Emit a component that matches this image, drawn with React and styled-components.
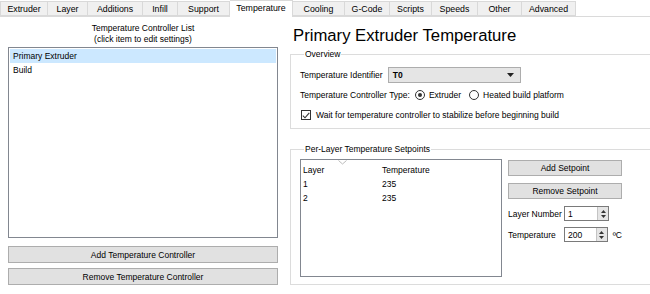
import React from 'react'
import styled, { createGlobalStyle } from 'styled-components'

// ─── global ────────────────────────────────────────────────────────────────
const GlobalStyle = createGlobalStyle`
  html, body {
    margin: 0;
    padding: 0;
    background: #fff;
    overflow: hidden;
  }
  body {
    font-family: 'Liberation Sans', Arial, sans-serif;
    font-size: 8.5px;
    color: #000;
  }
`

// ─── tab strip ─────────────────────────────────────────────────────────────
const Page = styled.div`
  width: 650px;
  height: 294px;
  display: flex;
  flex-direction: column;
  overflow: hidden;
`

const TabStrip = styled.div`
  height: 17px;
  display: flex;
  align-items: flex-end;
  background: #fff;
  box-sizing: border-box;
  border-bottom: 1px solid #dadada;
`

const Tab = styled.div`
  box-sizing: border-box;
  width: ${p => p.$w}px;
  height: ${p => (p.$active ? 17 : 15)}px;
  margin-bottom: ${p => (p.$active ? -1 : 0)}px;
  display: flex;
  align-items: center;
  justify-content: center;
  background: ${p => (p.$active ? '#fff' : '#f0f0f0')};
  border: 1px solid #d9d9d9;
  border-bottom: ${p => (p.$active ? 'none' : '1px solid #d9d9d9')};
  border-left-width: ${p => (p.$first ? 1 : 0)}px;
  padding-bottom: ${p => (p.$active ? 2 : 0)}px;
  font-size: 8.8px;
`

const Body = styled.div`
  flex: 1;
  display: flex;
  gap: 12px;
  padding: 0 0 0 8px;
`

// ─── left column ───────────────────────────────────────────────────────────
const LeftCol = styled.div`
  width: 270px;
  display: flex;
  flex-direction: column;
  padding-top: 6px;
`

const ListCaption = styled.div`
  text-align: center;
  line-height: 11px;
  margin-bottom: 2px;
`

const ListBox = styled.div`
  height: 191px;
  box-sizing: border-box;
  border: 1px solid #828790;
  padding: 1px;
  margin-bottom: 8px;
`

const ListItem = styled.div`
  height: 14px;
  line-height: 14px;
  padding-left: 3px;
  background: ${p => (p.$selected ? '#cce8ff' : 'transparent')};
`

const Button = styled.div`
  box-sizing: border-box;
  height: ${p => p.$h || 17}px;
  display: flex;
  align-items: center;
  justify-content: center;
  background: #e1e1e1;
  border: 1px solid #adadad;
  white-space: nowrap;
  margin-bottom: ${p => p.$mb || 0}px;
`

// ─── right column ──────────────────────────────────────────────────────────
const RightCol = styled.div`
  flex: 1;
  display: flex;
  flex-direction: column;
  margin-right: -20px;
`

const Title = styled.div`
  font-size: 16.7px;
  line-height: 20px;
  padding: 9px 0 0 3px;
  height: 23px;
  white-space: nowrap;
`

const Group = styled.fieldset`
  margin: 0 0 ${p => p.$mb || 0}px 0;
  padding: ${p => p.$pad};
  border: 1px solid #dcdcdc;
  height: ${p => p.$h}px;
  box-sizing: border-box;
  min-width: 0;

  legend {
    padding: 0 1px;
    margin-left: 4px;
    font-size: 8.5px;
    line-height: 10px;
  }
`

const Row = styled.div`
  display: flex;
  align-items: center;
  white-space: nowrap;
  height: ${p => p.$h || 16}px;
  margin-bottom: ${p => p.$mb || 0}px;
`

const Label = styled.span`
  margin-right: ${p => p.$mr || 0}px;
  width: ${p => (p.$w ? p.$w + 'px' : 'auto')};
  flex-shrink: 0;
`

const Combo = styled.div`
  box-sizing: border-box;
  width: 133px;
  height: 16px;
  background: #e5e5e5;
  border: 1px solid #adadad;
  display: flex;
  align-items: center;
  justify-content: space-between;
  padding: 0 6px 0 4px;
  font-weight: bold;
`

const Radio = styled.span`
  width: 10px;
  height: 10px;
  border-radius: 50%;
  border: 1px solid #333;
  box-sizing: border-box;
  display: inline-flex;
  align-items: center;
  justify-content: center;
  margin: 0 4px 0 ${p => p.$ml || 0}px;

  &::after {
    content: '';
    width: 4px;
    height: 4px;
    border-radius: 50%;
    background: ${p => (p.$on ? '#333' : 'transparent')};
  }
`

const Check = styled.span`
  width: 10px;
  height: 10px;
  border: 1px solid #333;
  box-sizing: border-box;
  display: inline-flex;
  align-items: center;
  justify-content: center;
  margin: 0 5px 0 1px;
`

const SetpointsBody = styled.div`
  display: flex;
  gap: 6px;
`

const ListView = styled.div`
  width: 202px;
  height: 118px;
  margin-top: 1px;
  box-sizing: border-box;
  border: 1px solid #828790;
  position: relative;
  padding-top: 4px;
`

const SortMark = styled.svg`
  position: absolute;
  left: 37px;
  top: 0px;
`

const LvRow = styled.div`
  display: flex;
  height: 12px;
  align-items: center;
  margin-bottom: 2px;
`

const LvCell = styled.span`
  width: ${p => p.$w}px;
  padding-left: 2px;
`

const SideControls = styled.div`
  width: 114px;
  display: flex;
  flex-direction: column;
  padding-top: 2px;
`

const Spin = styled.div`
  box-sizing: border-box;
  width: 45px;
  height: 15px;
  border: 1px solid #7a7a7a;
  display: flex;
  align-items: center;
  background: #fff;
`

const SpinValue = styled.span`
  flex: 1;
  padding-left: 3px;
`

const SpinBtn = styled.div`
  width: 10px;
  height: 13px;
  background: #e5e5e5;
  border-left: 1px solid #c4c4c4;
  display: flex;
  flex-direction: column;
  align-items: center;
  justify-content: center;
  gap: 2px;
`

const Unit = styled.span`
  margin-left: 5px;
`

const tabs = [
  ['Extruder', 48],
  ['Layer', 40],
  ['Additions', 55],
  ['Infill', 35],
  ['Support', 52],
  ['Temperature', 63],
  ['Cooling', 52],
  ['G-Code', 45],
  ['Scripts', 42],
  ['Speeds', 46],
  ['Other', 44],
  ['Advanced', 54],
]

function SpinBox({ value }) {
  return (
    <Spin>
      <SpinValue>{value}</SpinValue>
      <SpinBtn>
        <svg width="5" height="3" viewBox="0 0 5 3"><path d="M0 3 L2.5 0 L5 3Z" fill="#333" /></svg>
        <svg width="5" height="3" viewBox="0 0 5 3"><path d="M0 0 L2.5 3 L5 0Z" fill="#333" /></svg>
      </SpinBtn>
    </Spin>
  )
}

export default function App() {
  return (
    <Page>
      <GlobalStyle />
      <TabStrip>
        {tabs.map(([t, w], i) => (
          <Tab key={t} $w={w} $first={i === 0} $active={t === 'Temperature'}>
            {t}
          </Tab>
        ))}
      </TabStrip>

      <Body>
        <LeftCol>
          <ListCaption>
            Temperature Controller List
            <br />
            (click item to edit settings)
          </ListCaption>
          <ListBox>
            <ListItem $selected>Primary Extruder</ListItem>
            <ListItem>Build</ListItem>
          </ListBox>
          <Button $mb={5}>Add Temperature Controller</Button>
          <Button>Remove Temperature Controller</Button>
        </LeftCol>

        <RightCol>
          <Title>Primary Extruder Temperature</Title>

          <Group $h={80} $mb={15} $pad="8px 9px 0 9px">
            <legend>Overview</legend>
            <Row $h={16} $mb={4}>
              <Label $mr={5}>Temperature Identifier</Label>
              <Combo>
                <span>T0</span>
                <svg width="7" height="4" viewBox="0 0 7 4"><path d="M0 0 L7 0 L3.5 4Z" fill="#222" /></svg>
              </Combo>
            </Row>
            <Row $h={16} $mb={4}>
              <Label $mr={5}>Temperature Controller Type:</Label>
              <Radio $on />
              <Label>Extruder</Label>
              <Radio $ml={8} />
              <Label>Heated build platform</Label>
            </Row>
            <Row $h={16}>
              <Check>
                <svg width="8" height="7" viewBox="0 0 8 7">
                  <path d="M0.8 3.6 L3 5.8 L7.3 0.8" fill="none" stroke="#333" strokeWidth="1.1" />
                </svg>
              </Check>
              <Label>Wait for temperature controller to stabilize before beginning build</Label>
            </Row>
          </Group>

          <Group $h={141} $pad="4px 9px 0 9px">
            <legend>Per-Layer Temperature Setpoints</legend>
            <SetpointsBody>
              <ListView>
                <SortMark width="9" height="5" viewBox="0 0 9 5">
                  <path d="M0.5 0.5 L4.5 4 L8.5 0.5" fill="none" stroke="#bbb" strokeWidth="1" />
                </SortMark>
                <LvRow>
                  <LvCell $w={77}>Layer</LvCell>
                  <LvCell $w={100}>Temperature</LvCell>
                </LvRow>
                <LvRow>
                  <LvCell $w={77}>1</LvCell>
                  <LvCell $w={100}>235</LvCell>
                </LvRow>
                <LvRow>
                  <LvCell $w={77}>2</LvCell>
                  <LvCell $w={100}>235</LvCell>
                </LvRow>
              </ListView>
              <SideControls>
                <Button $h={16} $mb={7}>Add Setpoint</Button>
                <Button $h={16} $mb={7}>Remove Setpoint</Button>
                <Row $h={15} $mb={6}>
                  <Label $w={56}>Layer Number</Label>
                  <SpinBox value="1" />
                </Row>
                <Row $h={15}>
                  <Label $w={56}>Temperature</Label>
                  <SpinBox value="200" />
                  <Unit>ºC</Unit>
                </Row>
              </SideControls>
            </SetpointsBody>
          </Group>
        </RightCol>
      </Body>
    </Page>
  )
}
